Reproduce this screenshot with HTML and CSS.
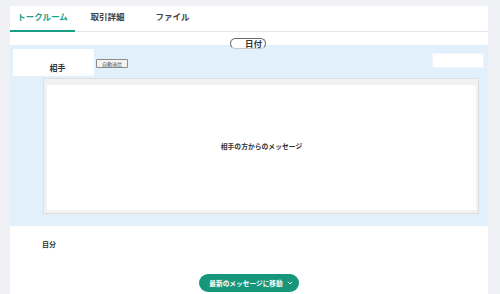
FILE: index.html
```html
<!DOCTYPE html>
<html lang="ja">
<head>
<meta charset="utf-8">
<link rel="stylesheet" href="styles.css">
</head>
<body>
<div class="page">
  <div class="panel">
    <nav class="tabs">
      <div class="tab active">トークルーム</div>
      <div class="tab">取引詳細</div>
      <div class="tab">ファイル</div>
    </nav>
    <div class="date-row"><span class="date-pill">日付</span></div>
    <section class="thread">
      <div class="thread-head">
        <div class="partner">相手</div>
        <button class="auto-btn">自動送信</button>
        <div class="side-box"></div>
      </div>
      <div class="msg-frame">
        <div class="msg-inner">相手の方からのメッセージ</div>
      </div>
    </section>
    <section class="mine">
      <div class="mine-label">自分</div>
      <div class="jump-row">
        <button class="jump-btn">最新のメッセージに移動<svg class="chev" viewBox="0 0 8 8" width="6" height="6"><path d="M1.5 2.8 L4 5.3 L6.5 2.8" fill="none" stroke="#fff" stroke-width="1.3" stroke-linecap="round" stroke-linejoin="round"/></svg></button>
      </div>
    </section>
  </div>
</div>
</body>
</html>
```

FILE: styles.css
```css
* { box-sizing: border-box; }
html, body { margin: 0; padding: 0; }
body {
  background: #f0f1f4;
  font-family: "Noto Sans CJK JP", "Noto Sans", sans-serif;
  color: #333;
  height: 294px;
  overflow: hidden;
}
.page {
  padding: 6px 12px 0 10px;
  height: 294px;
}
.panel {
  background: #fff;
  height: 100%;
  display: flex;
  flex-direction: column;
}
.tabs {
  display: flex;
  border-bottom: 1px solid #e6e7ea;
}
.tab {
  width: 65px;
  height: 26px;
  margin-bottom: -1px;
  padding-bottom: 4px;
  display: flex;
  align-items: center;
  justify-content: center;
  font-size: 8.5px;
  font-weight: 700;
  color: #444;
  border-bottom: 2px solid transparent;
}
.tab.active {
  color: #17a085;
  border-bottom-color: #17a085;
}
.date-row {
  height: 13px;
  display: flex;
  justify-content: center;
  align-items: flex-start;
  padding-top: 6px;
}
.date-pill {
  position: relative;
  z-index: 1;
  width: 36px;
  height: 11px;
  margin-left: -2px;
  display: flex;
  align-items: center;
  justify-content: flex-end;
  padding-right: 3px;
  background: #fff;
  border: 1px solid #6a6a6a;
  border-bottom-color: #c8c8c8;
  border-radius: 6px;
  font-size: 8.5px;
  font-weight: 700;
  color: #333;
  line-height: 1;
}
.thread {
  background: #e2f0fc;
  padding: 4px 0 12px 0;
}
.thread-head {
  display: flex;
  align-items: flex-start;
  height: 27px;
}
.partner {
  width: 81px;
  height: 27px;
  margin-left: 3px;
  background: #fff;
  display: flex;
  justify-content: center;
  padding: 14px 0 0 8px;
  font-size: 8px;
  font-weight: 700;
  line-height: 9px;
  color: #333;
}
.auto-btn {
  margin: 10px 0 0 2px;
  height: 9px;
  width: 32px;
  padding: 0;
  border: 1px solid #8a8a8a;
  border-radius: 1px;
  background: #f4f4f4;
  font-family: inherit;
  font-size: 5px;
  line-height: 7px;
  color: #444;
}
.side-box {
  margin: 4px 4px 0 auto;
  width: 52px;
  height: 15px;
  background: #fff;
  border: 1px solid #eef5fc;
}
.msg-frame {
  margin: 2px 9px 0 33px;
  height: 136px;
  background: #f2f2f2;
  border: 1px solid #dedede;
  padding: 6px 2px 3px 3px;
}
.msg-inner {
  background: #fff;
  height: 100%;
  display: flex;
  align-items: center;
  justify-content: center;
  padding-bottom: 4px;
  font-size: 6.8px;
  font-weight: 700;
  color: #333;
}
.mine {
  flex: 1;
  padding: 13px 0 0 32px;
}
.mine-label {
  font-size: 7px;
  font-weight: 700;
  line-height: 10px;
  color: #333;
}
.jump-row {
  display: flex;
  justify-content: center;
  margin: 25px 0 0 -32px;
}
.jump-btn {
  width: 100px;
  height: 18px;
  border: none;
  border-radius: 9px;
  background: #16977c;
  color: #fff;
  font-family: inherit;
  font-size: 6.7px;
  font-weight: 700;
  display: flex;
  align-items: center;
  justify-content: center;
  gap: 4px;
  padding: 0 0 0 4px;
}
.chev { display: block; }
```
